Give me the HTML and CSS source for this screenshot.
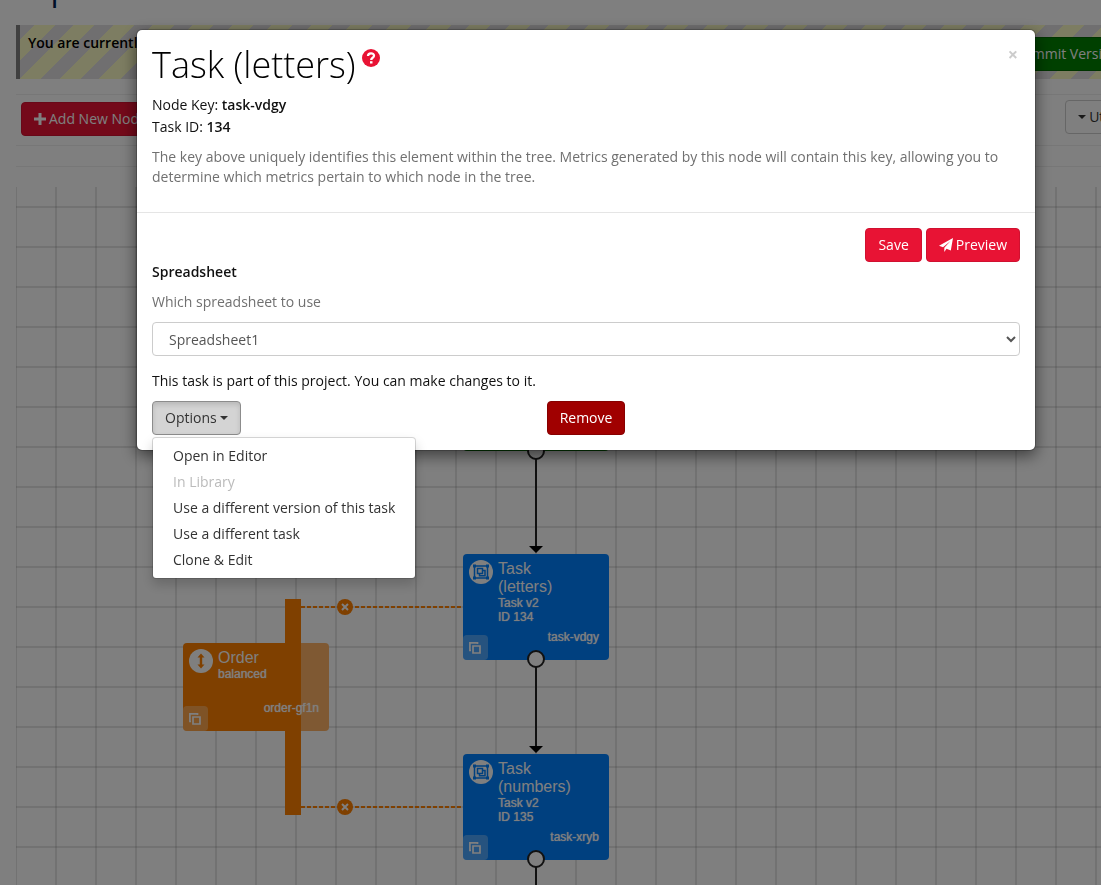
FILE: index.html
```html
<!DOCTYPE html>
<html lang="en">
<head>
<meta charset="utf-8">
<title>Task (letters)</title>
<link rel="stylesheet" href="styles.css">
</head>
<body>
<svg class="defs" aria-hidden="true">
  <symbol id="group" viewBox="0 0 24 24">
    <circle cx="12" cy="12" r="12" fill="#fff"/>
    <g fill="none" stroke="#0080ff" stroke-width="1.5">
      <path d="M5.500 6h13v12h-13z"/>
      <path d="M8.500 8.500h5v5h-5zM13.500 10.500H16v5.200h-5.500V13.500"/>
    </g>
    <path fill="#0080ff" d="M4 4.500h3v3H4zM17 4.500h3v3h-3zM4 16.500h3v3H4zM17 16.500h3v3h-3z"/>
  </symbol>
  <symbol id="arrows" viewBox="0 0 24 24">
    <circle cx="12" cy="12" r="12" fill="#fff"/>
    <path fill="#ff8000" d="M12 4.500l3.500 4h-2.300v7h2.300L12 19.500l-3.500-4h2.300v-7H8.500z"/>
  </symbol>
  <symbol id="copy" viewBox="0 0 12 12">
    <path fill="none" stroke="#fff" stroke-width="1.700" d="M4 4h7v7H4zM2 8.500H.900V.900H8.500V2"/>
  </symbol>
  <symbol id="cross" viewBox="0 0 16 16">
    <circle cx="8" cy="8" r="8" fill="#ff8000"/>
    <path stroke="#fff" stroke-width="2" d="M5 5l6 6M11 5l-6 6"/>
  </symbol>
</svg>

<div class="page">
  <h1 class="page-title">Experiment</h1>
  <div class="banner">
    <strong>You are currently editing this version.</strong>
    <button class="btn btn-commit" type="button">Commit Version</button>
  </div>
  <div class="toolbar">
    <button class="btn btn-primary" type="button"><svg class="plus" viewBox="0 0 12 12"><path fill="#fff" d="M4.500 0h3v4.500H12v3H7.500V12h-3V7.500H0v-3h4.500z"/></svg> Add New Node</button>
    <button class="btn btn-default" type="button"><span class="caret"></span> Utilities</button>
  </div>
  <div class="spacer"></div>
  <div class="canvas">
    <svg class="links" width="1140" height="720">
      <g stroke="#222" stroke-width="2"><path d="M520 264V360M520 472V560M520 672V760"/></g>
      <path d="M513 359h14l-7 7zM513 559h14l-7 7z"/>
      <path d="M285 420H447M285 620H447" stroke="#ff8000" stroke-width="2" stroke-dasharray="4 2"/>
    </svg>
    <div class="node start"></div>
    <div class="node task first">
      <svg class="node-icon"><use href="#group"/></svg>
      <div class="node-name">Task (letters)</div>
      <div class="node-info">Task v2<br>ID 134</div>
      <div class="node-key">task-vdgy</div>
      <button class="node-copy" type="button" aria-label="Copy"><svg><use href="#copy"/></svg></button>
    </div>
    <div class="node task second">
      <svg class="node-icon"><use href="#group"/></svg>
      <div class="node-name">Task (numbers)</div>
      <div class="node-info">Task v2<br>ID 135</div>
      <div class="node-key">task-xryb</div>
      <button class="node-copy" type="button" aria-label="Copy"><svg><use href="#copy"/></svg></button>
    </div>
    <div class="order-bar"></div>
    <div class="node order">
      <svg class="node-icon"><use href="#arrows"/></svg>
      <div class="node-name">Order</div>
      <div class="node-info">balanced</div>
      <div class="node-key">order-gf1n</div>
      <button class="node-copy" type="button" aria-label="Copy"><svg><use href="#copy"/></svg></button>
    </div>
    <svg class="links" width="1140" height="720">
      <g fill="#fff" stroke="#222" stroke-width="2"><circle cx="520" cy="264" r="8"/><circle cx="520" cy="472" r="8"/><circle cx="520" cy="672" r="8"/></g>
      <use href="#cross" x="321" y="412" width="16" height="16"/>
      <use href="#cross" x="321" y="612" width="16" height="16"/>
    </svg>
  </div>
</div>

<div class="backdrop">
  <section class="modal" role="dialog" aria-labelledby="dialog-title">
    <header class="modal-header">
      <div class="title-row">
        <h2 id="dialog-title">Task (letters)</h2>
        <svg class="help" viewBox="0 0 18 18"><circle cx="9" cy="9" r="9" fill="#e81334"/><path d="M6 7C6 3.500 12 3.500 12 6.700 12 8.900 9.200 8.600 9.200 11" fill="none" stroke="#fff" stroke-width="2.300"/><path d="M8 12.200h2.500v2.300H8z" fill="#fff"/></svg>
        <button class="close" type="button" aria-label="Close">×</button>
      </div>
      <div class="facts">
        <div>Node Key: <strong>task-vdgy</strong></div>
        <div>Task ID: <strong>134</strong></div>
      </div>
      <p class="muted">The key above uniquely identifies this element within the tree. Metrics generated by this node will contain this key, allowing you to determine which metrics pertain to which node in the tree.</p>
    </header>
    <div class="modal-body">
      <div class="actions">
        <button class="btn btn-primary" type="button">Save</button>
        <button class="btn btn-primary" type="button"><svg class="plane" viewBox="0 0 14 14"><path fill="#fff" d="M14 0l-2.200 12.500-4.300-1.800L5.300 14v-4.200L11.500 3 4 9.300 0 7.800z"/></svg> Preview</button>
      </div>
      <label class="field-label" for="sheet">Spreadsheet</label>
      <p class="muted">Which spreadsheet to use</p>
      <select id="sheet" class="select"><option>Spreadsheet1</option></select>
      <p class="note">This task is part of this project. You can make changes to it.</p>
      <div class="footer-row">
        <div class="dropdown">
          <button class="btn btn-default active" type="button" aria-expanded="true">Options <span class="caret"></span></button>
          <ul class="menu">
            <li><a href="#">Open in Editor</a></li>
            <li><a class="disabled" aria-disabled="true">In Library</a></li>
            <li><a href="#">Use a different version of this task</a></li>
            <li><a href="#">Use a different task</a></li>
            <li><a href="#">Clone &amp; Edit</a></li>
          </ul>
        </div>
        <button class="btn btn-danger" type="button">Remove</button>
      </div>
    </div>
  </section>
</div>
</body>
</html>
```
FILE: styles.css
```css
* { box-sizing: border-box; }
html, body { height: 100%; }
body {
  margin: 0;
  overflow: hidden;
  background: #fff;
  color: #111;
  font: 14px/20px "Open Sans", "Liberation Sans", sans-serif;
}
h1, h2, p, ul { margin: 0; padding: 0; font-weight: 400; }
strong { font-weight: 600; }
.defs { position: absolute; width: 0; height: 0; }

.btn {
  display: inline-flex;
  align-items: center;
  gap: 3px;
  height: 34px;
  padding: 0 12px;
  border: 1px solid transparent;
  border-radius: 4px;
  color: #fff;
  font: inherit;
  white-space: nowrap;
}
.btn-primary { background: #e81334; border-color: #d01130; }
.btn-commit { background: #008000; border-color: #006700; }
.btn-danger { background: #a00000; border-color: #870000; }
.btn-default { background: #fff; border-color: #ccc; color: #333; }
.btn-default.active {
  background: #d4d4d4;
  border-color: #8c8c8c;
  box-shadow: inset 0 3px 5px rgba(0, 0, 0, .125);
}
.caret {
  border: 4px solid transparent;
  border-top-color: currentColor;
  border-bottom: 0;
}
.plus { width: 12px; height: 12px; }
.plane { width: 14px; height: 14px; }

.page { margin: 0 -55px 0 16px; height: 100%; display: flex; flex-direction: column; }
.page-title {
  flex: none;
  margin-top: -33px;
  height: 58px;
  color: #002050;
  font-size: 32px;
  line-height: 42px;
}
.banner {
  flex: none;
  display: flex;
  justify-content: space-between;
  align-items: flex-start;
  height: 54px;
  padding: 12px 24px 0 8px;
  border-left: 4px solid #808080;
  background: repeating-linear-gradient(135deg, #e0dee0 0 10px, #fafac4 10px 25px, #e0dee0 25px 28px);
}
.banner strong { margin-top: -4px; color: #000; }
.toolbar {
  flex: none;
  display: flex;
  justify-content: space-between;
  align-items: flex-start;
  height: 52px;
  margin-top: 15px;
  padding: 5px 5px 0;
  border: solid #eee;
  border-width: 1px 0;
}
.toolbar .btn-primary { margin-top: 2px; }
.spacer { flex: none; height: 41px; padding-top: 20px; }
.spacer::before { content: ""; display: block; border-top: 1px solid #eee; }
.canvas {
  flex: 1;
  position: relative;
  overflow: hidden;
  background:
    repeating-linear-gradient(90deg, #0000001a 0 1px, transparent 1px 39px, #0000001a 39px 40px),
    repeating-linear-gradient(180deg, transparent 0 19px, #0000001a 19px 21px, transparent 21px 40px);
}
.links { position: absolute; left: 0; top: 0; }

.node {
  position: absolute;
  width: 146px;
  border-radius: 4px;
  color: #fff;
  font-family: "Liberation Sans", sans-serif;
  padding: 6px 9px 0 35px;
}
.start { left: 447px; top: 164px; height: 100px; background: #008000; }
.task { height: 106px; background: #0080ff; }
.first { left: 447px; top: 367px; }
.second { left: 447px; top: 567px; }
.order { left: 167px; top: 456px; height: 88px; background: linear-gradient(90deg, #ff8000 118px, #ffb366 118px); }
.order-bar { position: absolute; left: 269px; top: 412px; width: 16px; height: 216px; background: #ff8000; }
.node-icon { position: absolute; left: 6px; top: 6px; width: 24px; height: 24px; }
.node-name { width: 80px; font-size: 16px; line-height: 18px; }
.node-info { font-size: 12px; line-height: 14px; text-shadow: 0 0 1px #fff; }
.node-key { position: absolute; right: 10px; bottom: 16px; font-size: 12px; line-height: 14px; text-shadow: 0 0 1px #fff; }
.node-copy {
  position: absolute;
  left: 0;
  bottom: 0;
  width: 25px;
  height: 25px;
  padding: 5px 6px;
  border: 0;
  border-radius: 4px;
  background: rgba(255, 255, 255, .3);
}
.node-copy svg { display: block; width: 12px; height: 12px; }

.backdrop {
  position: fixed;
  inset: 0;
  padding: 29px 65px 0 136px;
  background: rgba(0, 0, 0, .5);
}
.modal {
  background: #fff;
  background-clip: padding-box;
  border: 1px solid rgba(0, 0, 0, .2);
  border-radius: 6px;
  box-shadow: 0 5px 15px rgba(0, 0, 0, .5);
}
.modal-header { padding: 15px 15px 25px; border-bottom: 1px solid #e5e5e5; }
.close {
  width: 14px;
  height: 18px;
  margin-left: auto;
  padding: 0;
  border: 0;
  background: none;
  color: #ccc;
  font: 700 18px/18px "Open Sans", sans-serif;
}
.title-row { display: flex; align-items: flex-start; gap: 6px; }
.title-row h2 { color: #000; font-size: 36px; font-weight: 300; line-height: 40px; }
.help { width: 18px; height: 18px; margin-top: 4px; }
.facts { margin: 9px 0; line-height: 22px; }
.muted { color: #707070; }
.modal-body { padding: 15px; }
.actions { display: flex; justify-content: flex-end; gap: 4px; }
.field-label { display: block; font-weight: 600; margin-bottom: 10px; }
.select {
  display: block;
  width: 100%;
  height: 34px;
  margin: 10px 0 15px;
  padding: 0 12px;
  border: 1px solid #ccc;
  border-radius: 4px;
  background: #fff;
  color: #555;
  font: inherit;
}
.note { margin-bottom: 10px; }
.footer-row { display: grid; grid-template-columns: 1fr auto 1fr; }
.dropdown { position: relative; }
.menu {
  position: absolute;
  left: 0;
  top: 36px;
  padding: 5px 0;
  border: 1px solid rgba(0, 0, 0, .15);
  border-radius: 4px;
  background: #fff;
  background-clip: padding-box;
  box-shadow: 0 6px 12px rgba(0, 0, 0, .175);
  list-style: none;
}
.menu a {
  display: block;
  padding: 3px 20px;
  color: #333;
  text-decoration: none;
  white-space: nowrap;
}
.menu a.disabled { color: #bbb; }
```
